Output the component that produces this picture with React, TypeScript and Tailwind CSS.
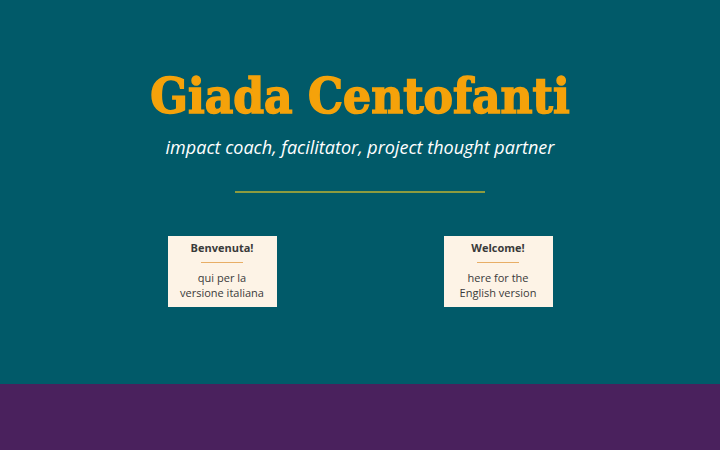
export default function App() {
  return (
    <div className="w-[720px] h-[450px] flex flex-col overflow-hidden" style={{ fontFamily: '"Open Sans", "Liberation Sans", sans-serif' }}>
      <section className="h-[384px] bg-[#015a69] flex flex-col items-center">
        <h1 className="mt-[68px] text-[49px] leading-[56px] font-bold text-[#f5a20a] [-webkit-text-stroke:1.5px_#f5a20a] [font-family:'DejaVu_Serif_Condensed','Liberation_Serif',serif]">
          Giada Centofanti
        </h1>
        <p className="mt-[11px] text-[18px] leading-[24px] italic text-white [font-family:'Open_Sans','Liberation_Sans',sans-serif]">
          impact coach, facilitator, project thought partner
        </p>
        <div className="mt-[32px] w-[250px] h-[1.5px] bg-[#8d9b3f]" />
        <div className="mt-[43px] flex gap-[167px]">
          <Card title="Benvenuta!" lines={["qui per la", "versione italiana"]} />
          <Card title="Welcome!" lines={["here for the", "English version"]} />
        </div>
      </section>
      <section className="flex-1 bg-[#4a215d]" />
    </div>
  );
}

function Card({ title, lines }: { title: string; lines: string[] }) {
  return (
    <a href="#" className="w-[109px] h-[71px] bg-[#fdf3e6] flex flex-col items-center pt-[4px] text-[#3a3a3a]">
      <span className="text-[11px] leading-[16px] font-bold">{title}</span>
      <span className="mt-[6px] w-[42px] h-px bg-[#e8ae66]" />
      <span className="mt-[7px] text-[11px] leading-[15px] text-center">
        {lines[0]}
        <br />
        {lines[1]}
      </span>
    </a>
  );
}
